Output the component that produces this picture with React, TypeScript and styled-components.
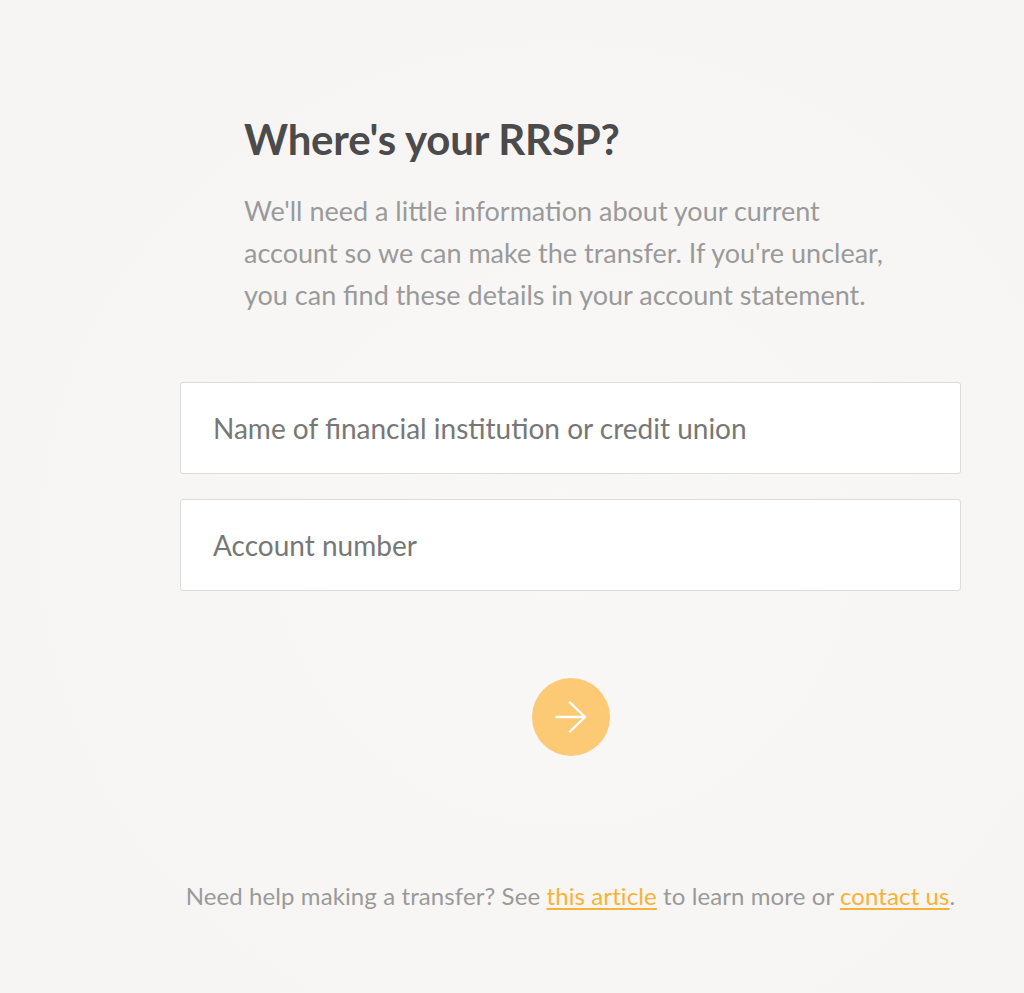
import React from "react";
import styled, { createGlobalStyle } from "styled-components";

const Global = createGlobalStyle`
  html, body { margin: 0; padding: 0; }
  body {
    background: #f7f6f4;
    font-family: Lato, "Liberation Sans", sans-serif;
    -webkit-font-smoothing: antialiased;
  }
`;

const Page = styled.div`
  min-height: 993px;
  box-sizing: border-box;
  background: radial-gradient(ellipse at 55% 55%, #f9f8f7 0%, #f6f5f3 70%);
  padding: 114px 0 0 180px;
`;

const Column = styled.div`
  width: 781px;
  display: flex;
  flex-direction: column;
`;

const Header = styled.div`
  padding: 0 64px;
`;

const Title = styled.h1`
  margin: 0;
  font-size: 42px;
  line-height: 50px;
  font-weight: 700;
  color: #4b4b4b;
  letter-spacing: -0.2px;
`;

const Lead = styled.p`
  margin: 26px 0 0;
  font-size: 27px;
  line-height: 42px;
  font-weight: 400;
  color: #9a9a9a;
`;

const Fields = styled.div`
  margin-top: 66px;
  display: flex;
  flex-direction: column;
  gap: 25px;
`;

const Input = styled.input`
  box-sizing: border-box;
  height: 92px;
  width: 100%;
  border: 1px solid #dcdcdc;
  border-radius: 3px;
  background: #fff;
  padding: 0 32px;
  font-family: inherit;
  font-size: 28px;
  color: #555;
  outline: none;
  &::placeholder { color: #777; }
`;

const ButtonRow = styled.div`
  display: flex;
  justify-content: center;
  margin-top: 87px;
`;

const NextButton = styled.button`
  width: 78px;
  height: 78px;
  border-radius: 50%;
  border: none;
  background: #fcca75;
  display: flex;
  align-items: center;
  justify-content: center;
  padding: 0;
  cursor: pointer;
`;

const Footer = styled.p`
  margin: 126px 0 0;
  text-align: center;
  font-size: 24px;
  line-height: 28px;
  letter-spacing: 0.1px;
  color: #9a9a9a;
`;

const Link = styled.a`
  color: #f9b233;
  text-decoration: underline;
  text-decoration-thickness: 1.5px;
  text-underline-offset: 3px;
`;

export default function App() {
  return (
    <>
      <Global />
      <Page>
        <Column>
          <Header>
            <Title>Where's your RRSP?</Title>
            <Lead>
              We'll need a little information about your current account so we can make the
              transfer. If you're unclear, you can find these details in your account statement.
            </Lead>
          </Header>
          <Fields>
            <Input placeholder="Name of financial institution or credit union" />
            <Input placeholder="Account number" />
          </Fields>
          <ButtonRow>
            <NextButton aria-label="Next">
              <svg width="32" height="32" viewBox="0 0 32 32" fill="none" stroke="#fff" strokeWidth="2.4" strokeLinecap="round" strokeLinejoin="round">
                <path d="M1.5 16H30" />
                <path d="M15 1.5L30 16L15 30.5" />
              </svg>
            </NextButton>
          </ButtonRow>
          <Footer>
            Need help making a transfer? See <Link href="#">this article</Link> to learn more or{" "}
            <Link href="#">contact us</Link>.
          </Footer>
        </Column>
      </Page>
    </>
  );
}
